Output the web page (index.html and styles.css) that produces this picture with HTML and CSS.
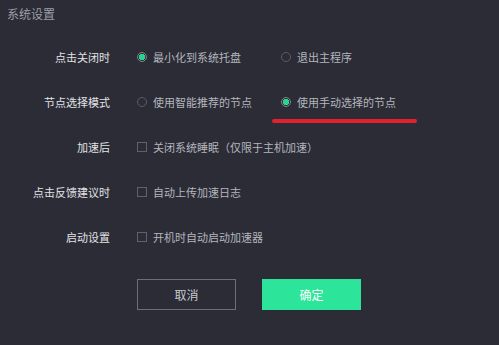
FILE: index.html
```html
<!DOCTYPE html>
<html lang="zh-CN">
<head>
    <meta charset="UTF-8">
    <title>系统设置</title>
    <link rel="stylesheet" href="styles.css">
</head>
<body>
    <div class="dialog">
        <div class="title">系统设置</div>
        <div class="form">
            <div class="row">
                <div class="label">点击关闭时</div>
                <div class="options">
                    <label class="option"><span class="radio checked"></span>最小化到系统托盘</label>
                    <label class="option"><span class="radio"></span>退出主程序</label>
                </div>
            </div>
            <div class="row">
                <div class="label">节点选择模式</div>
                <div class="options">
                    <label class="option"><span class="radio"></span>使用智能推荐的节点</label>
                    <label class="option marked"><span class="radio checked"></span>使用手动选择的节点<span class="underline"></span></label>
                </div>
            </div>
            <div class="row">
                <div class="label">加速后</div>
                <div class="options">
                    <label class="option"><span class="check"></span>关闭系统睡眠（仅限于主机加速）</label>
                </div>
            </div>
            <div class="row">
                <div class="label">点击反馈建议时</div>
                <div class="options">
                    <label class="option"><span class="check"></span>自动上传加速日志</label>
                </div>
            </div>
            <div class="row">
                <div class="label">启动设置</div>
                <div class="options">
                    <label class="option"><span class="check"></span>开机时自动启动加速器</label>
                </div>
            </div>
        </div>
        <div class="actions">
            <button class="btn btn-cancel">取消</button>
            <button class="btn btn-ok">确定</button>
        </div>
    </div>
</body>
</html>
```

FILE: styles.css
```css
body {
    margin: 0;
    font-family: "Noto Sans CJK SC", "Noto Sans", sans-serif;
    background-color: #2b2c36;
}

.dialog {
    width: 499px;
    height: 345px;
    background-color: #2b2c36;
    overflow: hidden;
}

.title {
    height: 28px;
    padding: 0 7px;
    line-height: 28px;
    font-size: 12px;
    color: #9d9fa7;
}

.form {
    padding-top: 6px;
}

.row {
    display: grid;
    grid-template-columns: 110px 1fr;
    column-gap: 27px;
    height: 45px;
    align-items: center;
}

.label {
    text-align: right;
    font-size: 11px;
    color: #e2e3e6;
}

.options {
    display: flex;
    align-items: center;
}

.option {
    position: relative;
    display: flex;
    align-items: center;
    gap: 6px;
    width: 144px;
    font-size: 11px;
    color: #b4b6bd;
    white-space: nowrap;
}

.radio {
    box-sizing: border-box;
    width: 10px;
    height: 10px;
    border: 1px solid #5a5c66;
    border-radius: 50%;
    flex-shrink: 0;
}

.radio.checked {
    border-color: #80838c;
    background: radial-gradient(circle, #27d590 0, #27d590 3px, transparent 3.5px);
}

.check {
    box-sizing: border-box;
    width: 10px;
    height: 10px;
    border: 1px solid #5f616b;
    flex-shrink: 0;
}

.underline {
    position: absolute;
    left: -9px;
    top: 25px;
    width: 145px;
    height: 4px;
    border-radius: 2px;
    background-color: #e3202d;
}

.actions {
    display: flex;
    gap: 26px;
    padding: 20px 0 0 137px;
}

.btn {
    box-sizing: border-box;
    width: 99px;
    height: 31px;
    font-family: inherit;
    font-size: 12px;
    border-radius: 0;
    cursor: pointer;
}

.btn-cancel {
    background-color: transparent;
    border: 1px solid #6d6f78;
    color: #c7c9ce;
}

.btn-ok {
    background-color: #2de59a;
    border: none;
    color: #ffffff;
}
```
